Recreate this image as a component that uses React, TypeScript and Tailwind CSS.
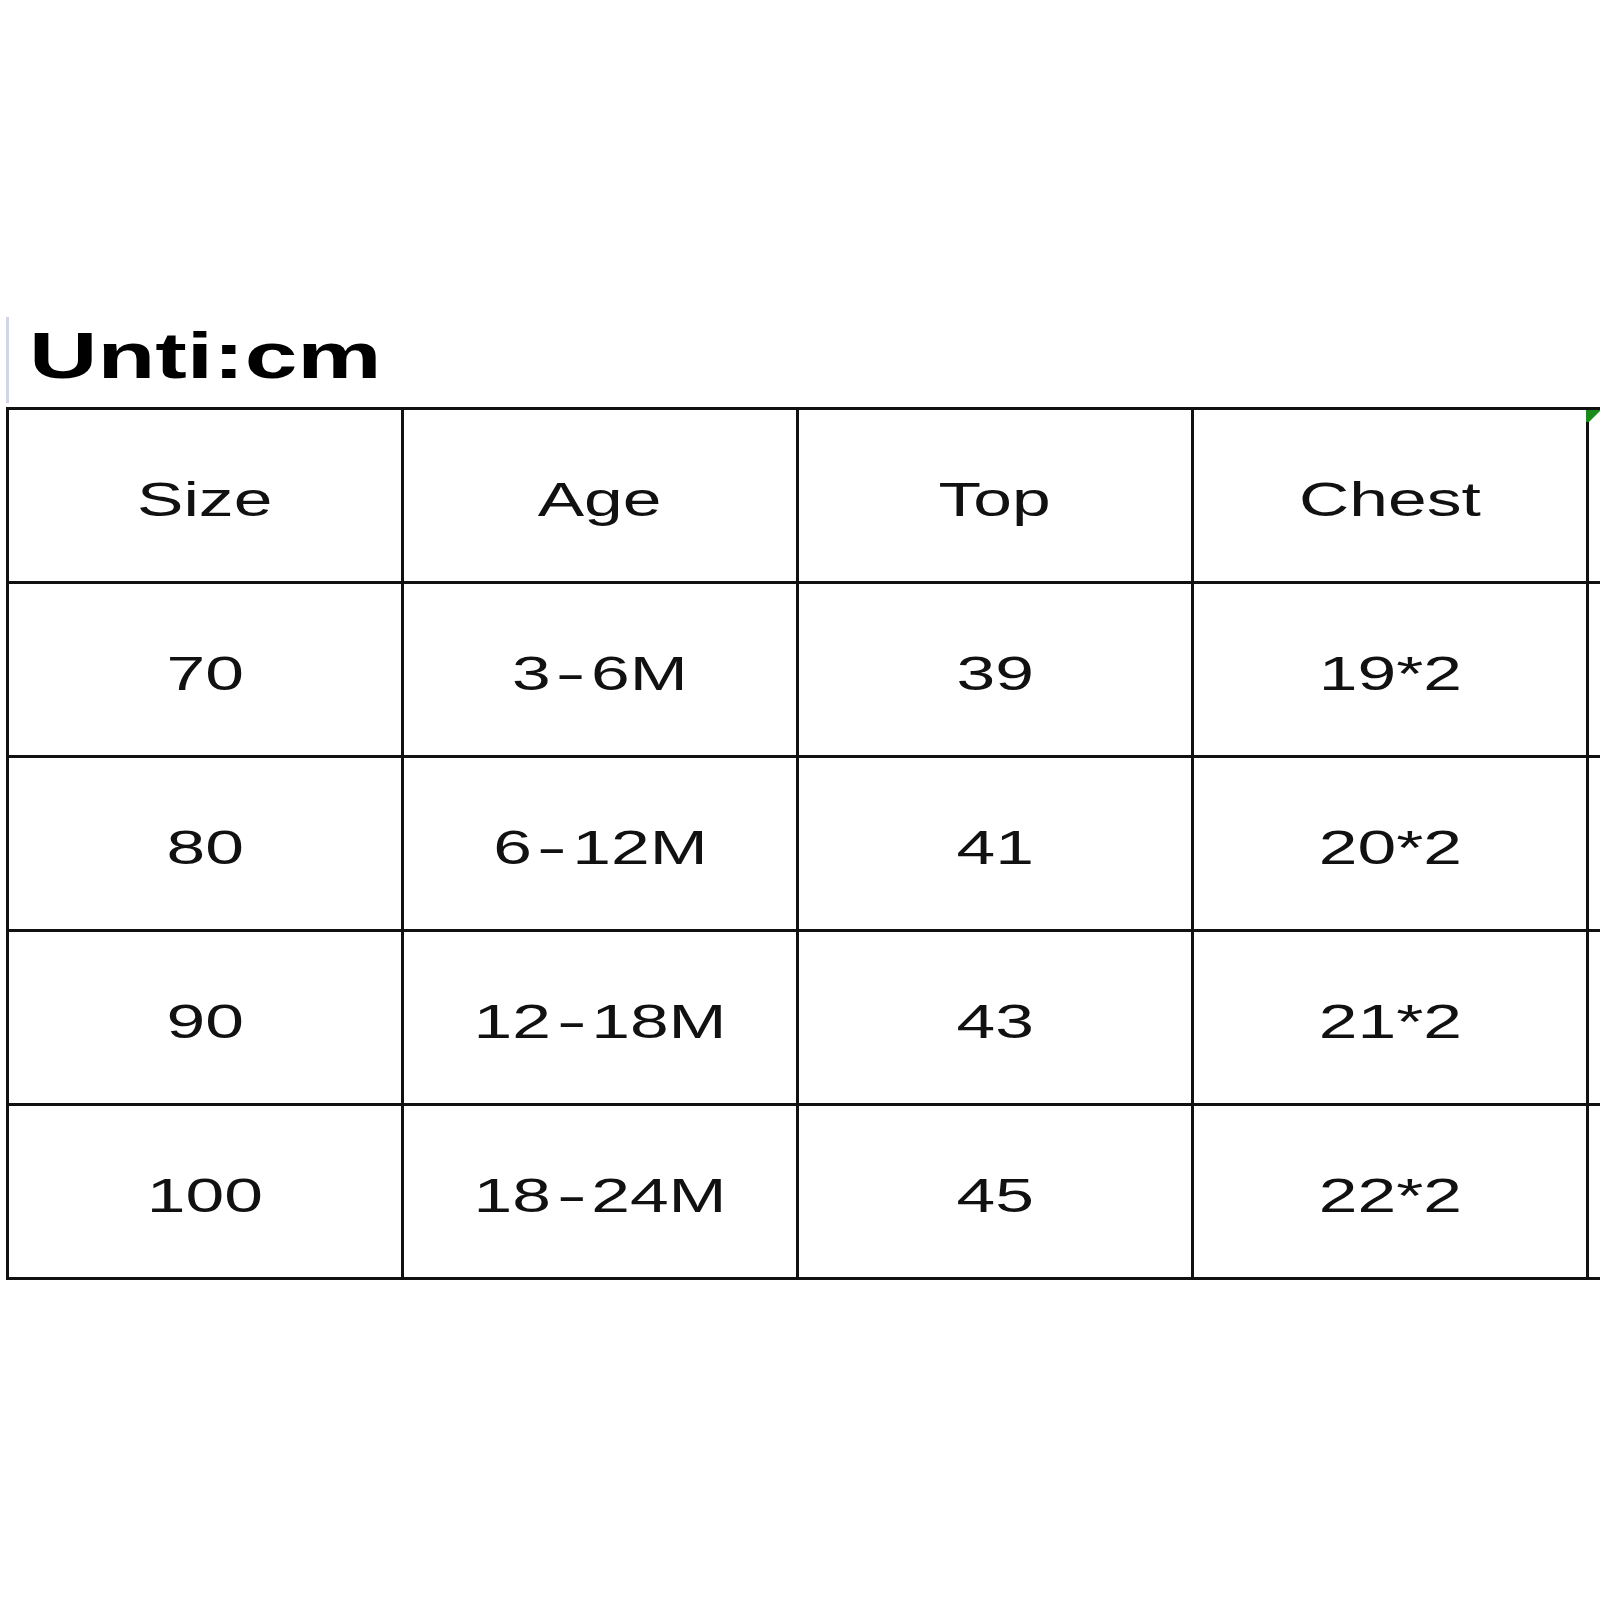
const rows = [
  ["Size", "Age", "Top", "Chest"],
  ["70", "3-6M", "39", "19*2"],
  ["80", "6-12M", "41", "20*2"],
  ["90", "12-18M", "43", "21*2"],
  ["100", "18-24M", "45", "22*2"],
];

function Cell({ text }: { text: string }) {
  const parts = text.split("-");
  return (
    <div className="flex h-[171px] w-[392px] box-content items-center justify-center border-r-[3px] border-b-[3px] border-[#111]">
      <span className="mt-[8px] inline-block scale-x-[1.42] text-[49px] leading-none text-[#111]">
        {parts.length === 2 ? (
          <>
            {parts[0]}
            <span className="mx-[6px] inline-block scale-x-[1.3]">-</span>
            {parts[1]}
          </>
        ) : (
          text
        )}
      </span>
    </div>
  );
}

export default function App() {
  return (
    <div
      className="h-[1600px] w-[1600px] overflow-hidden bg-white pt-[317px]"
      style={{ fontFamily: '"Liberation Sans", Arial, sans-serif' }}
    >
      {/* title */}
      <div className="flex h-[90px] items-start">
        <div className="ml-[6px] h-[86px] w-[3px] bg-[#d3d5e6]" />
        <h1 className="ml-[20px] mt-[7px] inline-block origin-left scale-x-[1.48] text-[64px] font-bold leading-none text-black">
          Unti:cm
        </h1>
      </div>

      {/* size table */}
      <div className="ml-[6px] flex flex-col border-t-[3px] border-l-[3px] border-[#111]">
        {rows.map((row, i) => (
          <div key={i} className="flex">
            {row.map((c, j) => (
              <Cell key={j} text={c} />
            ))}
            <div className="relative h-[171px] flex-1 box-content border-b-[3px] border-[#111]">
              {i === 0 && (
                <svg
                  className="absolute -left-[3px] top-0"
                  width="14"
                  height="12"
                  viewBox="0 0 14 12"
                >
                  <polygon points="0,0 14,0 14,1 3,12 0,12" fill="#1a8a1a" />
                </svg>
              )}
            </div>
          </div>
        ))}
      </div>
    </div>
  );
}
